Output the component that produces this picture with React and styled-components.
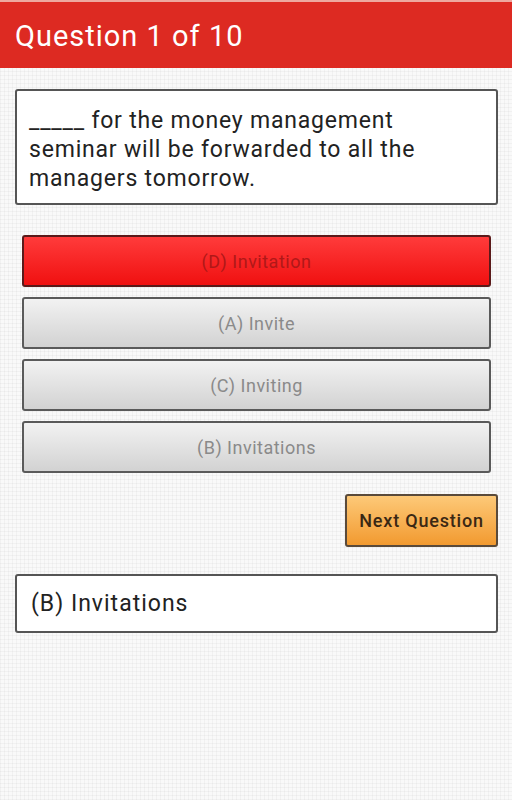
import React from 'react'
import styled, { createGlobalStyle } from 'styled-components'

const GlobalStyle = createGlobalStyle`
  html, body {
    margin: 0;
    padding: 0;
  }
  body {
    font-family: Roboto, "Liberation Sans", sans-serif;
    background-color: #f9f9f9;
    background-image:
      repeating-linear-gradient(0deg, rgba(0,0,0,0.03) 0 1px, transparent 1px 4px),
      repeating-linear-gradient(90deg, rgba(0,0,0,0.03) 0 1px, transparent 1px 4px);
    min-height: 800px;
  }
`

const options = [
  { label: '(D) Invitation', picked: true },
  { label: '(A) Invite' },
  { label: '(C) Inviting' },
  { label: '(B) Invitations' },
]

function App()
{
  return (
    <>
      <GlobalStyle />
      <Page>
        <Header>Question 1 of 10</Header>
        <Body>
          <QuestionBox>
            _____ for the money management seminar will be forwarded to all the managers tomorrow.
          </QuestionBox>
          <Options>
            {options.map((o) => (
              <Option key={o.label} $picked={o.picked}>{o.label}</Option>
            ))}
          </Options>
          <Actions>
            <NextButton>Next Question</NextButton>
          </Actions>
          <AnswerBox>(B) Invitations</AnswerBox>
        </Body>
      </Page>
    </>
  )
}

const Page = styled.div`
  width: 512px;
  min-height: 800px;
`

const Header = styled.div`
  height: 68px;
  box-sizing: border-box;
  border-top: 2px solid #eea89f;
  background: #dd2a22;
  color: #fff;
  font-size: 29px;
  letter-spacing: 1px;
  display: flex;
  align-items: center;
  padding: 2px 0 0 15px;
`

const Body = styled.div`
  padding: 21px 14px 0 15px;
  display: flex;
  flex-direction: column;
`

const QuestionBox = styled.div`
  height: 116px;
  box-sizing: border-box;
  background: #fff;
  border: 2px solid #555;
  border-radius: 3px;
  padding: 15px 30px 0 12px;
  font-size: 23px;
  letter-spacing: 0.8px;
  line-height: 29px;
  color: #222;
`

const Options = styled.div`
  margin: 30px 7px 0 7px;
  display: flex;
  flex-direction: column;
  gap: 10px;
`

const Option = styled.div`
  height: 52px;
  box-sizing: border-box;
  border: 2px solid ${(p) => (p.$picked ? '#5a1a1a' : '#5a5a5a')};
  border-radius: 3px;
  background: ${(p) => (p.$picked
    ? 'linear-gradient(#ff3b3b, #f01010)'
    : 'linear-gradient(#f2f2f2, #d2d2d2)')};
  color: ${(p) => (p.$picked ? '#b01818' : '#8a8a8a')};
  font-size: 18px;
  letter-spacing: 0.5px;
  display: flex;
  align-items: center;
  justify-content: center;
`

const Actions = styled.div`
  display: flex;
  justify-content: flex-end;
  margin-top: 21px;
`

const NextButton = styled.div`
  width: 153px;
  height: 53px;
  box-sizing: border-box;
  border: 2px solid #5a4a3a;
  border-radius: 3px;
  background: linear-gradient(#fdc978, #f29a30);
  color: #3a2814;
  font-size: 18px;
  font-weight: 500;
  letter-spacing: 0.8px;
  display: flex;
  align-items: center;
  justify-content: center;
`

const AnswerBox = styled.div`
  margin-top: 27px;
  height: 59px;
  box-sizing: border-box;
  background: #fff;
  border: 2px solid #555;
  border-radius: 3px;
  padding-left: 14px;
  font-size: 23px;
  letter-spacing: 1px;
  color: #222;
  display: flex;
  align-items: center;
`

export default App
